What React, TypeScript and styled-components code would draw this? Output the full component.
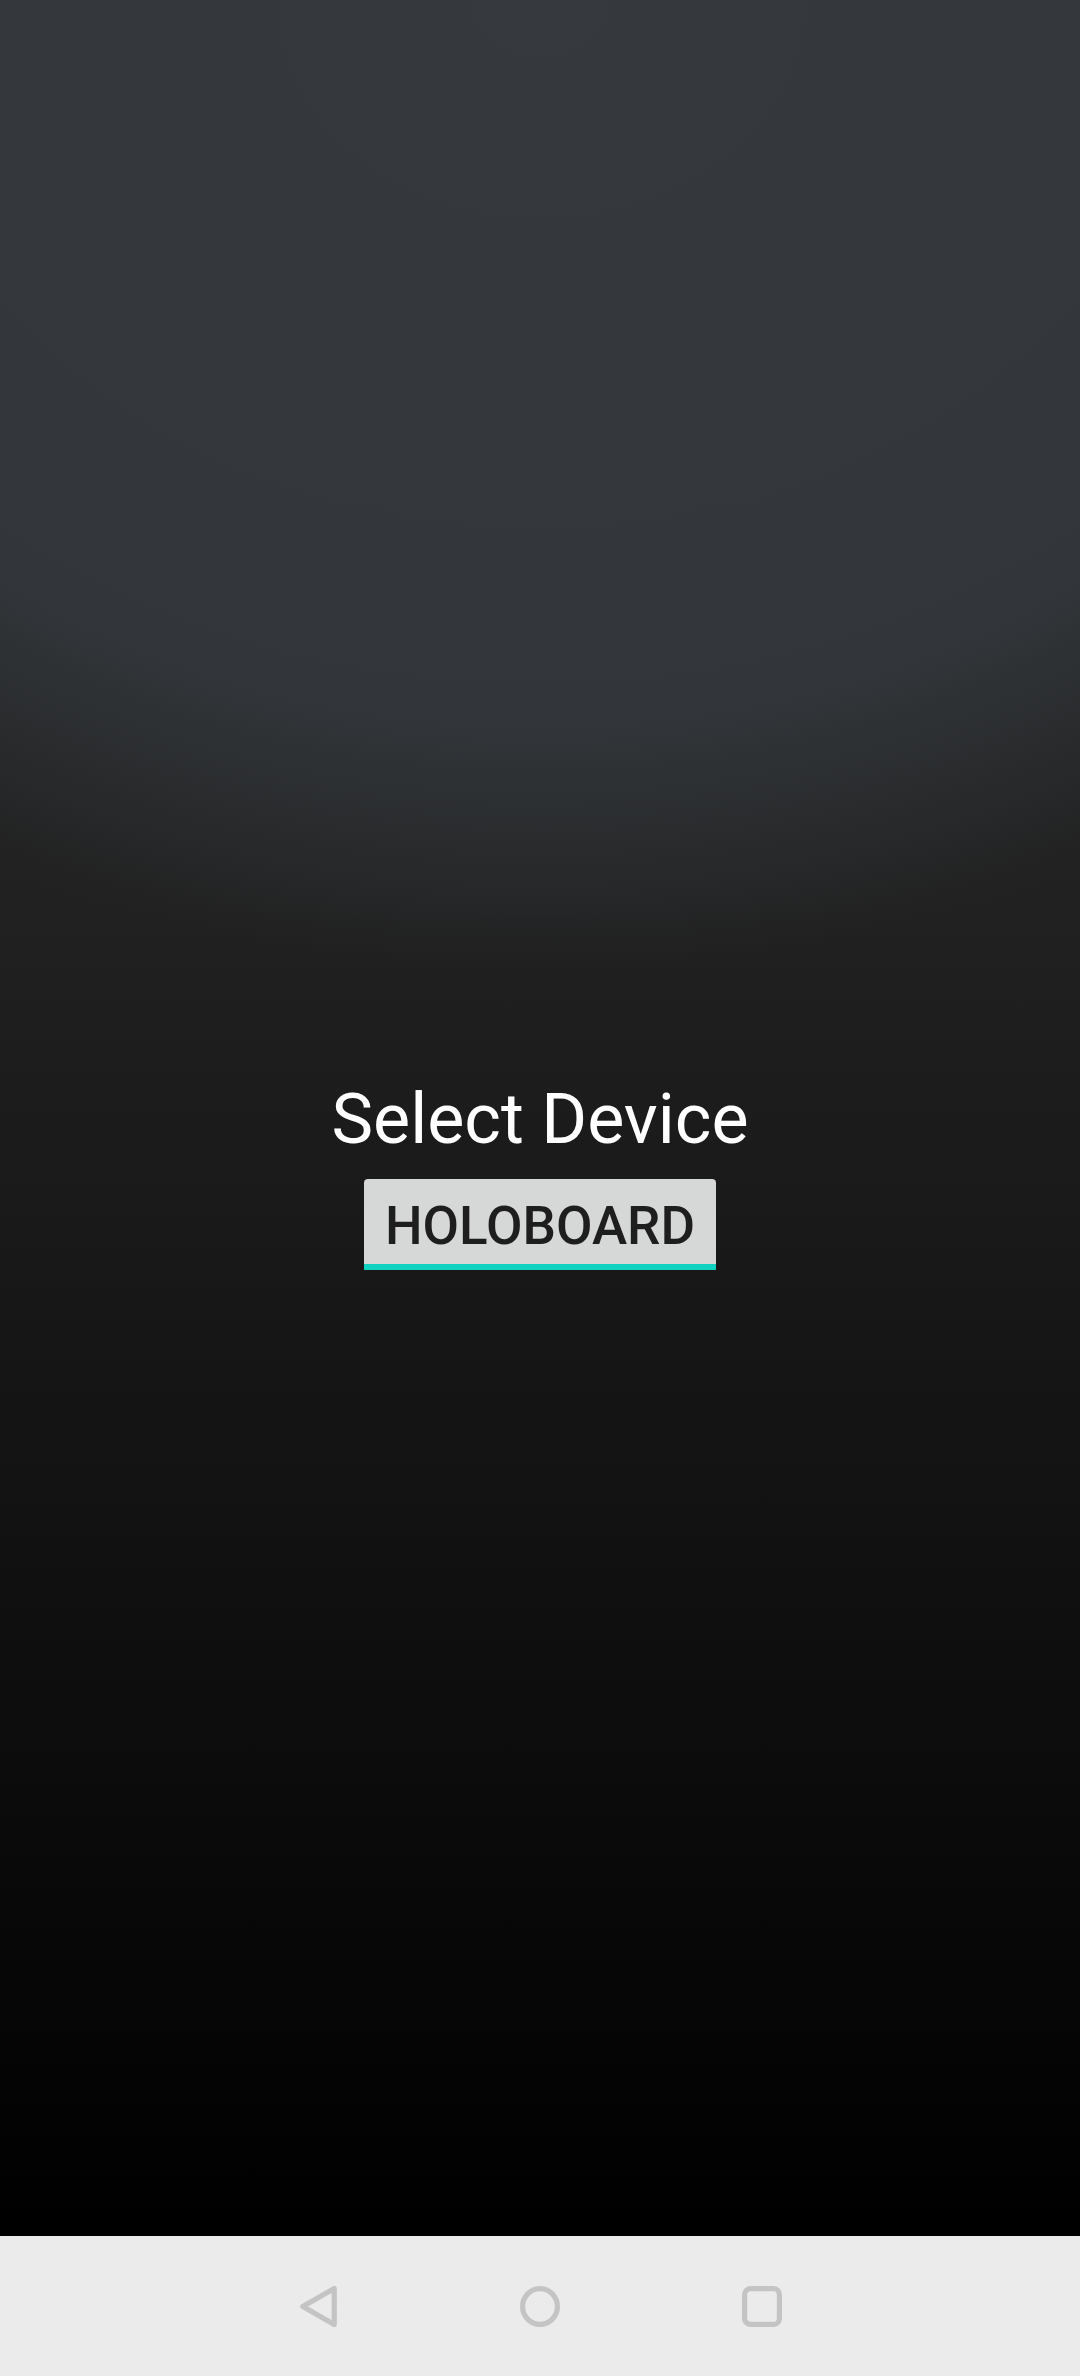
import styled, { createGlobalStyle } from "styled-components";

const GlobalStyle = createGlobalStyle`
  html, body {
    margin: 0;
    padding: 0;
    background: #000;
  }
  #root {
    width: 1080px;
    height: 2376px;
  }
`;

const Screen = styled.div`
  width: 1080px;
  height: 2376px;
  display: flex;
  flex-direction: column;
  font-family: Roboto, "Noto Sans", sans-serif;
`;

// holo dark backdrop: soft glow from the top over a fade to black
const Main = styled.main`
  flex: 1;
  display: flex;
  flex-direction: column;
  align-items: center;
  justify-content: center;
  padding-top: 112px;
  background:
    radial-gradient(
      ellipse 1200px 970px at 50% 0,
      #363a3e 0%,
      #32363a 74%,
      rgba(50, 54, 58, 0) 100%
    ),
    linear-gradient(to bottom, #232323 0px, #212121 900px, #000 2236px);
`;

const Title = styled.h1`
  margin: 0;
  font-size: 70px;
  line-height: 82px;
  font-weight: 400;
  color: #ffffff;
`;

const DeviceButton = styled.button`
  margin-top: 19px;
  padding: 16px 21px 7px;
  border: none;
  border-bottom: 6px solid #0fd2c0;
  border-radius: 4px 4px 0 0;
  background: #d6d7d7;
  color: #1e1e1e;
  font-family: Roboto, "Noto Sans", sans-serif;
  font-size: 53px;
  line-height: 62px;
  font-weight: 500;
  cursor: pointer;
`;

const NavBar = styled.nav`
  height: 140px;
  flex-shrink: 0;
  background: #ebebeb;
  display: flex;
  align-items: center;
  justify-content: center;
`;

const NavSlot = styled.div`
  width: 222px;
  display: flex;
  justify-content: center;
  align-items: center;
`;

const stroke = "#c4c4c4";

const BackIcon = () => (
  <svg width="37" height="41" viewBox="0 0 37 41">
    <path
      d="M2.75 20.5 L34.25 2.5 L34.25 38.5 Z"
      fill="none"
      stroke={stroke}
      strokeWidth="5.2"
      strokeLinejoin="round"
    />
  </svg>
);

const HomeIcon = () => (
  <svg width="40" height="41" viewBox="0 0 40 41">
    <ellipse cx="20" cy="20.5" rx="17.4" ry="17.9" fill="none" stroke={stroke} strokeWidth="5.2" />
  </svg>
);

const RecentsIcon = () => (
  <svg width="40" height="41" viewBox="0 0 40 41">
    <rect x="2.6" y="2.6" width="34.8" height="35.8" rx="6" fill="none" stroke={stroke} strokeWidth="5.2" />
  </svg>
);

export default function App() {
  return (
    <>
      <GlobalStyle />
      <Screen>
        <Main>
          <Title>Select Device</Title>
          <DeviceButton>HOLOBOARD</DeviceButton>
        </Main>
        <NavBar>
          <NavSlot>
            <BackIcon />
          </NavSlot>
          <NavSlot>
            <HomeIcon />
          </NavSlot>
          <NavSlot>
            <RecentsIcon />
          </NavSlot>
        </NavBar>
      </Screen>
    </>
  );
}
